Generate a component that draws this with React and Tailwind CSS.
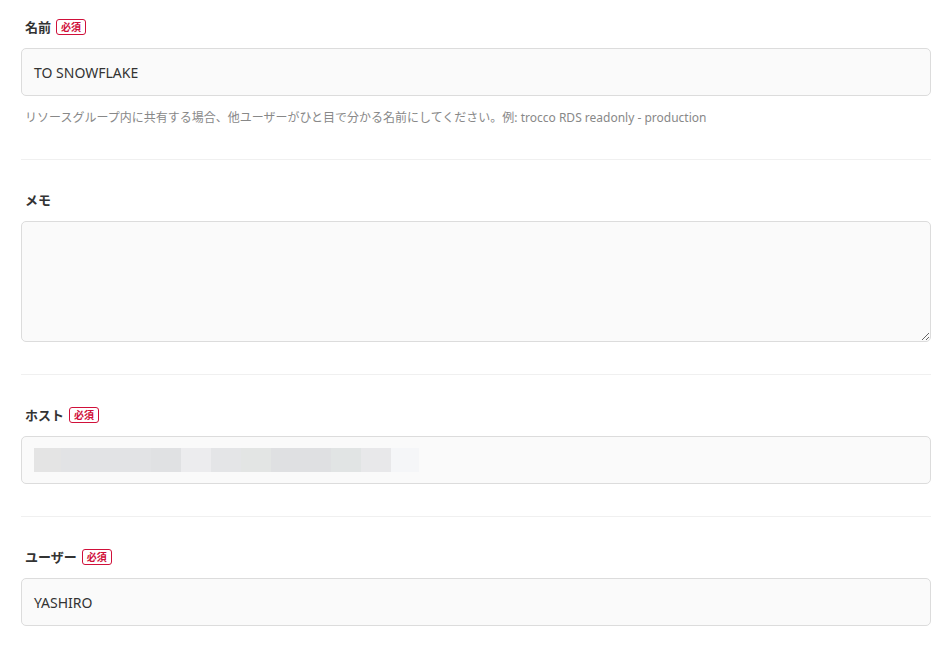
import React from "react";

const font = { fontFamily: '"Noto Sans", "Noto Sans CJK JP", sans-serif' };

function Badge() {
  return (
    <span className="ml-[5px] inline-flex h-[16px] items-center rounded-[3px] border border-[#d0103a] px-[4px] text-[10px] font-bold leading-none text-[#d0103a]">
      必須
    </span>
  );
}

function Label({ children, required }) {
  return (
    <div className="flex h-[20px] items-center pl-[4px] text-[13px] font-bold leading-[20px] text-[#333]">
      <span>{children}</span>
      {required && <Badge />}
    </div>
  );
}

function Input({ children }) {
  return (
    <div className="mt-[11px] flex h-[48px] items-center rounded-[5px] border border-[#dcdcdc] bg-[#fafafa] pl-[12px] text-[14px] text-[#333]">
      {children}
    </div>
  );
}

const blocks = [
  [27, "#e4e4e4"],
  [90, "#e2e3e5"],
  [30, "#e0e1e3"],
  [30, "#ececee"],
  [30, "#e4e5e7"],
  [30, "#e3e5e4"],
  [60, "#dfe0e2"],
  [30, "#e1e4e4"],
  [30, "#e8e8ea"],
  [28, "#f5f6f8"],
];

export default function App() {
  return (
    <div className="min-h-screen w-[951px] bg-white pl-[21px] pr-[20px]" style={font}>
      <div className="border-b border-[#f0f0f0] pb-[33px] pt-[17px]">
        <Label required>名前</Label>
        <Input>TO SNOWFLAKE</Input>
        <div className="mt-[14px] pl-[4px] text-[12px] leading-[16px] text-[#888]">
          リソースグループ内に共有する場合、他ユーザーがひと目で分かる名前にしてください。例: trocco RDS readonly - production
        </div>
      </div>
      <div className="border-b border-[#f0f0f0] pb-[32px] pt-[30px]">
        <Label>メモ</Label>
        <textarea className="mt-[11px] block h-[121px] w-full rounded-[5px] border border-[#dcdcdc] bg-[#fafafa] outline-none" />
      </div>
      <div className="border-b border-[#f0f0f0] pb-[32px] pt-[30px]">
        <Label required>ホスト</Label>
        <Input>
          <div className="flex h-[24px]">
            {blocks.map(([w, c], i) => (
              <div key={i} className="h-full" style={{ width: w, backgroundColor: c }} />
            ))}
          </div>
        </Input>
      </div>
      <div className="pt-[30px]">
        <Label required>ユーザー</Label>
        <Input>YASHIRO</Input>
      </div>
    </div>
  );
}
